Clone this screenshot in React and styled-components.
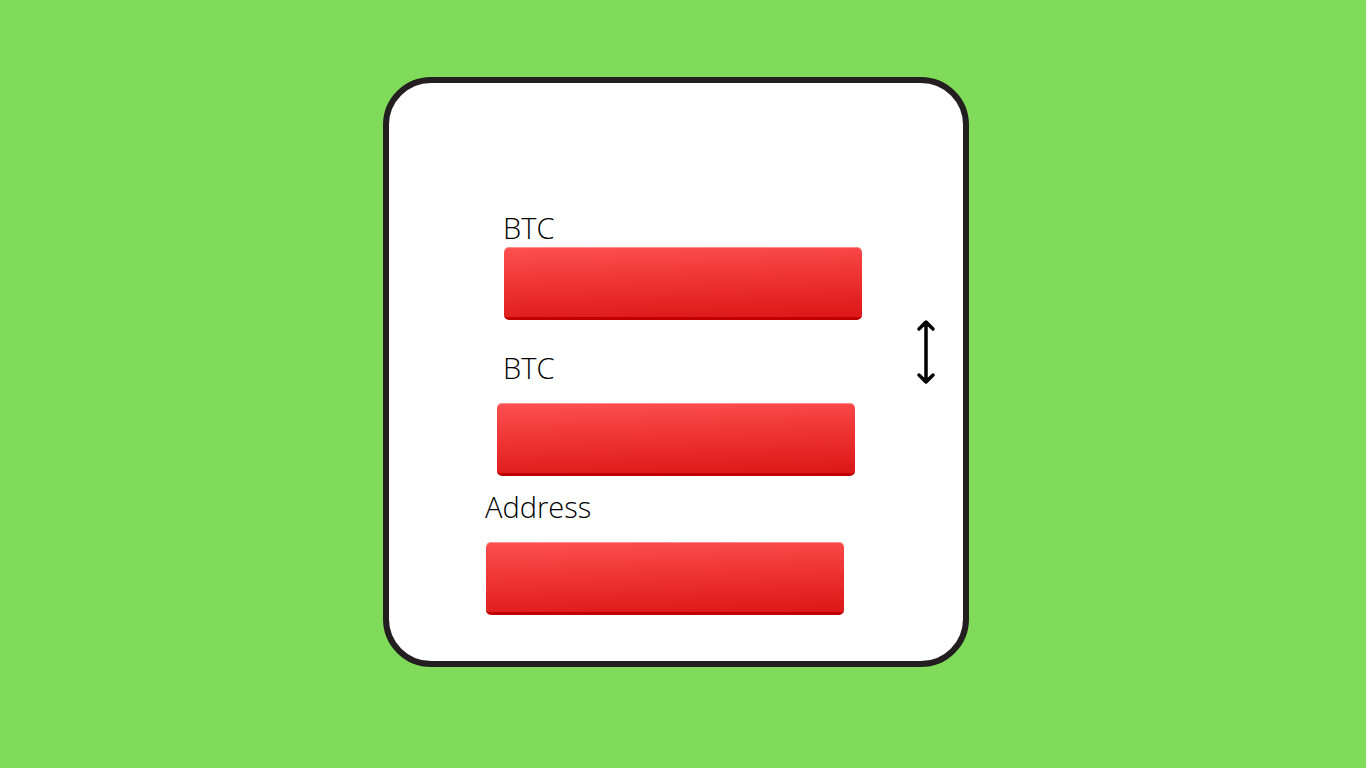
import React from "react";
import styled, { createGlobalStyle } from "styled-components";

const GlobalStyle = createGlobalStyle`
  html, body {
    margin: 0;
    padding: 0;
    background: #80db5a;
    font-family: "Open Sans", "Liberation Sans", sans-serif;
  }
`;

const Page = styled.div`
  width: 1366px;
  height: 768px;
  box-sizing: border-box;
  padding: 77px 0 0 383px;
  background: #80db5a;
`;

const Card = styled.div`
  position: relative;
  box-sizing: border-box;
  width: 586px;
  height: 590px;
  background: #fff;
  border: 6px solid #231f20;
  border-radius: 48px;
  display: flex;
  flex-direction: column;
  padding-top: 126px;
`;

const Field = styled.div`
  display: flex;
  flex-direction: column;
  margin-top: ${p => p.$top || 0}px;
`;

const Label = styled.span`
  font-size: 29px;
  font-weight: 300;
  color: #000;
  line-height: 38px;
  margin-left: ${p => p.$left}px;
  margin-bottom: ${p => p.$gap || 0}px;
`;

/* glossy red bar */
const Bar = styled.div`
  box-sizing: border-box;
  width: 358px;
  height: 73px;
  margin-left: ${p => p.$left}px;
  border-radius: 5px;
  background: linear-gradient(178deg, #fe5151 0%, #ef3535 45%, #dc1717 100%);
  border-bottom: 3px solid #c00000;
  box-shadow: inset 0 1px 0 rgba(255, 255, 255, 0.35);
`;

const Arrow = styled.svg`
  position: absolute;
  left: 527px;
  top: 236px;
`;

const fields = [
  { label: "BTC", labelLeft: 114, barLeft: 115, top: 0, gap: 0 },
  { label: "BTC", labelLeft: 114, barLeft: 108, top: 29, gap: 16 },
  { label: "Address", labelLeft: 96, barLeft: 97, top: 12, gap: 16 },
];

export default function App() {
  return (
    <Page>
      <GlobalStyle />
      <Card>
        {fields.map((f, i) => (
          <Field key={i} $top={f.top}>
            <Label $left={f.labelLeft} $gap={f.gap}>{f.label}</Label>
            <Bar $left={f.barLeft} />
          </Field>
        ))}
        <Arrow width="20" height="66" viewBox="0 0 20 66" fill="none">
          <path
            d="M10 3 V63 M3 10 L10 3 L17 10 M3 56 L10 63 L17 56"
            stroke="#000"
            strokeWidth="3.5"
            strokeLinecap="round"
            strokeLinejoin="round"
          />
        </Arrow>
      </Card>
    </Page>
  );
}
